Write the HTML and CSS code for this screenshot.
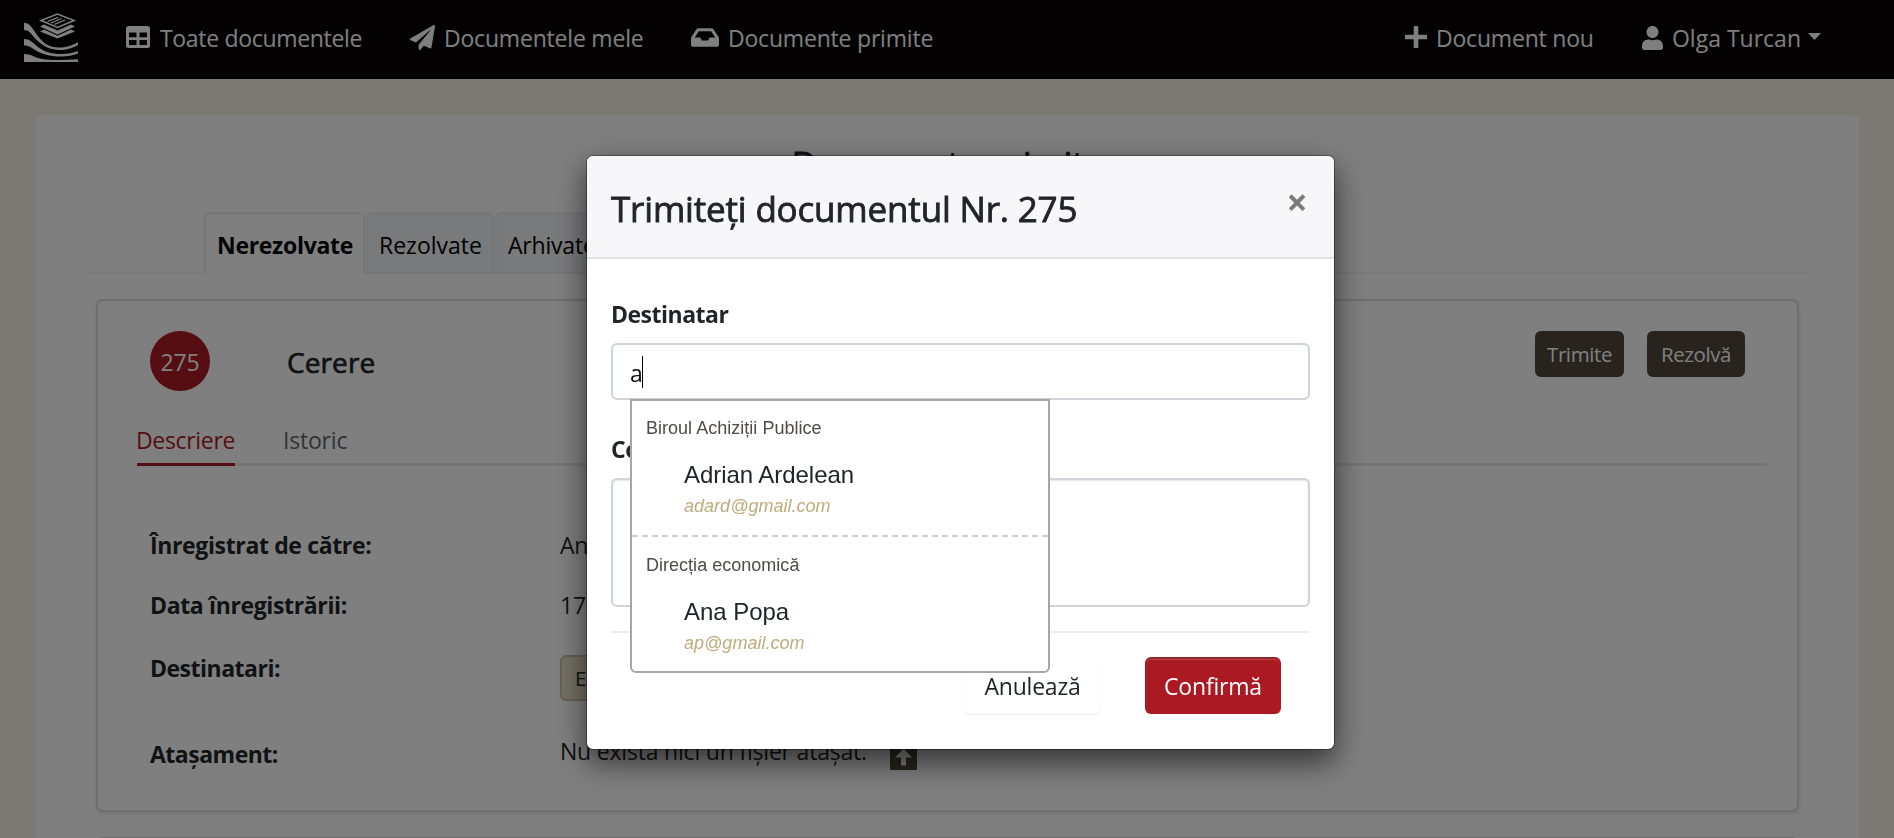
FILE: index.html
```html
<!DOCTYPE html>
<html lang="ro">
<head>
<meta charset="utf-8">
<title>Documente primite</title>
<link rel="stylesheet" href="styles.css">
</head>
<body>
<nav class="navbar">
  <svg class="logo" width="54" height="50" viewBox="0 0 54 50">
    <g fill="#fff">
      <path d="M0 10C5 10 6 12 11 19C18 30 25 34.500 35 34.500C42 34.500 49 32.500 54 29V32C49 35 42 37.200 35 37C23 36.500 16 31 9 23C5 18 4 17.500 0 17Z"/>
      <path d="M0 26C6 26 8 29 14 34C20 38.500 27 41 37 41C44 41 49 40 54 38V40.500C49 42.500 44 43.500 37 43.500C25 43.500 18 41 11 37C6 33.500 4 32.500 0 32.500Z"/>
      <path d="M0 41C7 41 10 44 16 45.500C24 47.400 40 47.300 54 46.300V49H0Z"/>
      <path d="M16 13.500 20 11.500 33.500 17.500 47 11.500 51 13.500 33.500 21.500Z"/>
      <path d="M16 18.500 20 16.500 33.500 22.800 47 16.500 51 18.500 33.500 25.500Z"/>
    </g>
    <path d="M17 7.500 33.500 1 50 7.500 33.500 14.500Z" fill="none" stroke="#fff" stroke-width="1.600"/>
    <path d="M23.500 8.500 34 4.300M27 10 37.500 5.500M30.500 11.300 41 7" stroke="#fff" stroke-width="1.300"/>
  </svg>
  <div class="nav-main">
    <a class="nav-link"><svg width="24" height="22" viewBox="0 0 24 22"><path fill="#fff" fill-rule="evenodd" d="M2.500 0h19A2.500 2.500 0 0 1 24 2.500v17A2.500 2.500 0 0 1 21.500 22h-19A2.500 2.500 0 0 1 0 19.500v-17A2.500 2.500 0 0 1 2.500 0ZM3 6.500V11.200H10.500V6.500ZM13.500 6.500V11.200H21V6.500ZM3 14V19H10.500V14ZM13.500 14V19H21V14Z"/></svg><span class="t-all">Toate documentele</span></a>
    <a class="nav-link"><svg class="plane" width="25" height="25" viewBox="0 0 512 512"><path fill="#fff" d="M476 3.200L12.500 270.600c-18.100 10.400-15.800 35.600 2.200 43.200L121 358.400l287.300-253.200c5.500-4.900 13.300 2.600 8.600 8.300L176 407v80.500c0 23.600 28.500 32.900 42.500 15.800L282 426l124.600 52.200c14.200 6 30.400-2.900 33-18.200l72-432C515 7.800 493.300-6.800 476 3.200z"/></svg><span>Documentele mele</span></a>
    <a class="nav-link"><svg class="tray" width="28" height="25" viewBox="0 0 576 512"><path fill="#fff" d="M567.900 243.900L462.400 85.600A48 48 0 0 0 422.400 64H153.600a48 48 0 0 0-40 21.400L8.100 243.900A48 48 0 0 0 0 270.500V400c0 26.500 21.500 48 48 48h480c26.500 0 48-21.500 48-48V270.500a48 48 0 0 0-8.100-26.600zM162.300 128h251.500l85.300 128H384l-32 64H224l-32-64H76.900l85.400-128z"/></svg><span>Documente primite</span></a>
  </div>
  <div class="nav-side">
    <a class="nav-link"><svg width="22" height="22" viewBox="0 0 22 22"><path d="M11 1.500V20.500M1.500 11H20.500" fill="none" stroke="#fff" stroke-width="4.600" stroke-linecap="round"/></svg><span>Document nou</span></a>
    <a class="nav-link"><svg class="person" width="21" height="24" viewBox="0 0 448 512"><path fill="#fff" d="M224 256c70.700 0 128-57.300 128-128S294.700 0 224 0 96 57.300 96 128s57.300 128 128 128zm89.600 32h-16.700c-22.200 10.200-46.900 16-72.900 16s-50.600-5.800-72.900-16h-16.700C60.200 288 0 348.200 0 422.400V464c0 26.500 21.500 48 48 48h352c26.500 0 48-21.500 48-48v-41.600c0-74.200-60.200-134.400-134.400-134.400z"/></svg><span class="t-user">Olga Turcan</span><i class="caret"></i></a>
  </div>
</nav>

<main class="page">
  <h1 class="page-title">Documente primite</h1>
  <div class="tabs">
    <a class="tab tab-active">Nerezolvate</a>
    <a class="tab tab-solved">Rezolvate</a>
    <a class="tab tab-archive">Arhivate</a>
  </div>
  <section class="card">
    <header class="card-head">
      <span class="number">275</span>
      <h2 class="card-title">Cerere</h2>
      <div class="card-actions">
        <button class="btn-dark btn-send">Trimite</button>
        <button class="btn-dark btn-solve">Rezolvă</button>
      </div>
    </header>
    <div class="subtabs"><a class="subtab subtab-active">Descriere</a><a class="subtab">Istoric</a></div>
    <dl class="details">
      <dt>Înregistrat de către:</dt><dd>An</dd>
      <dt>Data înregistrării:</dt><dd>17</dd>
      <dt class="t-tight">Destinatari:</dt><dd><span class="badge">E</span></dd>
      <dt class="t-tight">Atașament:</dt>
      <dd class="attachment">Nu exista nici un fișier atașat.<svg width="27" height="27" viewBox="0 0 27 27"><rect width="27" height="27" rx="1.500" fill="#504638"/><path fill="#fff" d="M13.500 5.500 22 14.500H16V22.500H11V14.500H5Z"/></svg></dd>
    </dl>
  </section>
  <section class="card card-next"></section>
</main>

<div class="backdrop"></div>

<div class="modal">
  <header class="modal-head">
    <h2 class="modal-title">Trimiteți documentul Nr. 275</h2>
    <button class="close">×</button>
  </header>
  <div class="modal-body">
    <label class="label">Destinatar</label>
    <div class="field">
      <div class="input">a<i class="cursor"></i></div>
      <div class="suggest">
        <div class="group">
          <div class="dept">Biroul Achiziții Publice</div>
          <div class="name">Adrian Ardelean</div>
          <div class="mail">adard@gmail.com</div>
        </div>
        <div class="group">
          <div class="dept">Direcția economică</div>
          <div class="name">Ana Popa</div>
          <div class="mail">ap@gmail.com</div>
        </div>
      </div>
    </div>
    <label class="label label-comment">Co</label>
    <div class="textarea"></div>
    <div class="rule"></div>
    <footer class="modal-foot">
      <button class="btn btn-cancel">Anulează</button>
      <button class="btn btn-confirm">Confirmă</button>
    </footer>
  </div>
</div>
</body>
</html>
```
FILE: styles.css
```css
* { box-sizing: border-box; }
body {
  margin: 0;
  height: 838px;
  overflow: hidden;
  background: #f4f2e9;
  color: #212529;
  font: 23px/36px "Open Sans", "Noto Sans", sans-serif;
  letter-spacing: -.2px;
}
h1, h2, dl, dd { margin: 0; }
button { border: 0; margin: 0; padding: 0; font: inherit; letter-spacing: inherit; }

/* Top bar */
.navbar {
  display: flex;
  height: 79px;
  padding: 0 73px 0 24px;
  background: #070305;
  color: #fff;
}
.logo { margin: 13px 48px 0 0; }
.nav-main { display: grid; grid-template-columns: 284px 281px auto; padding-top: 20px; }
.nav-side { display: grid; grid-template-columns: 237px auto; margin-left: auto; padding-top: 20px; }
.nav-link { display: flex; white-space: nowrap; }
.nav-link svg { flex: none; margin: 6px 9px 0 0; }
.nav-link svg.plane { margin-top: 5px; }
.nav-link svg.tray { margin-top: 5px; }
.nav-link svg.person { margin-right: 8px; }
.nav-link .t-all { margin-left: 1px; letter-spacing: -.32px; }
.nav-link .t-user { letter-spacing: 0; margin-left: 1px; }
.caret {
  margin: 13px 0 0 7px;
  width: 13px;
  height: 7px;
  background: #fff;
  clip-path: polygon(0 0, 100% 0, 50% 100%);
}

/* Page */
.page {
  margin: 36px 35px 0 36px;
  height: 723px;
  overflow: hidden;
  padding-top: 24px;
  background: #fff;
  border-radius: 6px 6px 0 0;
}
.page-title {
  font-size: 35px;
  line-height: 50px;
  font-weight: 500;
  letter-spacing: -.31px;
  text-align: center;
  -webkit-text-stroke: .8px;
}
.tabs {
  display: flex;
  gap: 1px;
  margin: 23px 48px 0 51px;
  padding-left: 117px;
  height: 62px;
  border-bottom: 2px solid #f4f4f5;
}
.tab {
  height: 62px;
  padding: 13px 0 0 11px;
  border: 2px solid #ebecef;
  border-radius: 6px 6px 0 0;
  background: #f3f4f9;
  color: #000;
}
.tab-active { width: 161px; background: #fff; border-bottom-color: #fff; font-weight: 700; letter-spacing: -.31px; }
.tab-solved { width: 128px; letter-spacing: 0; }
.tab-archive { width: 124px; letter-spacing: -.2px; }

.card {
  height: 513px;
  margin: 25px 60px 0;
  padding: 30px 30px 0 39px;
  border: 2px solid #dedede;
  border-radius: 7px;
  box-shadow: 0 2px 5px rgba(0, 0, 0, .1);
}
.card-head { display: flex; height: 60px; padding: 0 22px 0 13px; }
.number {
  width: 60px;
  height: 60px;
  line-height: 62px;
  border-radius: 50%;
  background: #ae1c24;
  color: #fff;
  text-align: center;
}
.card-title {
  margin: 11px 0 0 77px;
  font-size: 28px;
  line-height: 40px;
  font-weight: 500;
  letter-spacing: .1px;
  -webkit-text-stroke: .7px;
}
.card-actions { display: flex; gap: 23px; margin-left: auto; }
.btn-dark {
  height: 46px;
  border-radius: 6px;
  background: #504638;
  color: #fff;
  font-size: 20.5px;
  letter-spacing: -.4px;
}
.btn-send { width: 89px; }
.btn-solve { width: 98px; }
.subtabs {
  display: flex;
  gap: 48px;
  height: 44px;
  margin-top: 31px;
  box-shadow: inset 0 -3px #ebebec;
}
.subtab { height: 44px; color: #5f6870; }
.subtab-active { width: 98px; border-bottom: 3px solid #ae1c24; color: #ae1c24; text-indent: -1px; white-space: nowrap; letter-spacing: -.33px; }
.details {
  display: grid;
  grid-template-columns: 410px 1fr;
  grid-template-rows: 60px 63px 86px 40px;
  margin: 61px 0 0 13px;
}
.details dt { font-weight: 700; letter-spacing: -.36px; }
.details .t-tight { letter-spacing: -.5px; }
.badge {
  display: block;
  width: 130px;
  height: 46px;
  margin-top: 5px;
  padding-left: 13px;
  border: 2px solid #cbc1a6;
  border-radius: 6px;
  background: #e9dfc7;
  font-size: 20.5px;
  line-height: 42px;
}
.attachment { display: flex; margin-top: -3px; white-space: nowrap; }
.attachment svg { margin: 10px 0 0 23px; }

/* Dialog */
.backdrop { position: fixed; inset: 0; background: rgba(0, 0, 0, .5); }
.modal {
  position: fixed;
  left: 586px;
  top: 155px;
  width: 749px;
  height: 595px;
  border: 1px solid rgba(0, 0, 0, .35);
  border-radius: 7px;
  background: #fff;
  background-clip: padding-box;
  box-shadow: 0 12px 30px rgba(0, 0, 0, .6);
}
.modal-head {
  display: flex;
  justify-content: space-between;
  height: 103px;
  padding: 28px 24px 0;
  border-bottom: 2px solid #dee2e6;
  border-radius: 6px 6px 0 0;
  background: #f7f7fa;
}
.modal-title {
  font-size: 35px;
  line-height: 50px;
  font-weight: 500;
  letter-spacing: -.18px;
  -webkit-text-stroke: .8px;
}
.close {
  width: 26px;
  height: 38px;
  margin-top: -1px;
  background: none;
  color: #7b7b7d;
  font-size: 37px;
  line-height: 38px;
  font-weight: 700;
}
.modal-body { padding: 37px 24px 0; }
.label { display: block; font-weight: 700; letter-spacing: -.5px; }
.label-comment { padding-top: 1px; height: 36px; }
.field { position: relative; margin: 11px 0 30px; }
.input {
  display: flex;
  height: 57px;
  padding: 10px 0 0 17px;
  border: 2px solid #ced4da;
  border-radius: 6px;
  color: #111;
}
.cursor { width: 1px; height: 32px; margin: 1px 0 0 -1px; background: #000; }
.textarea {
  height: 129px;
  margin-top: 12px;
  border: 2px solid #ced4da;
  border-radius: 6px;
  box-shadow: inset 0 1px 2px rgba(0, 0, 0, .1);
}
.rule { height: 2px; margin: 24px 0; background: #ececec; }
.modal-foot { display: flex; justify-content: flex-end; gap: 45px; padding-right: 29px; }
.btn { height: 57px; border-radius: 6px; }
.btn-cancel {
  width: 135px;
  background: #fff;
  color: #212529;
  box-shadow: 0 1px 1px rgba(0, 0, 0, .09);
}
.btn-confirm {
  width: 136px;
  border: 2px solid #ab1a22;
  border-top-color: #93262c;
  background: #ab1a22;
  color: #fff;
  box-shadow: inset 0 1px #bb4046;
}

/* Suggestion list */
.suggest {
  position: absolute;
  left: 19px;
  top: 56px;
  width: 420px;
  height: 274px;
  border: 2px solid #a6a6a6;
  border-radius: 0 0 6px 6px;
  background: #fff;
  font-family: "Liberation Sans", Arial, sans-serif;
  letter-spacing: .02px;
}
.group { padding: 14px 0 15px; }
.group + .group { padding-top: 15px; border-top: 2px dashed #ccc; }
.dept { padding-left: 14px; font-size: 18px; line-height: 27px; color: #504b45; }
.name { margin-top: 15px; padding-left: 52px; font-size: 24px; line-height: 36px; letter-spacing: -.05px; }
.mail { padding-left: 52px; font-size: 18px; line-height: 27px; font-style: italic; color: #bfab7d; }
```
